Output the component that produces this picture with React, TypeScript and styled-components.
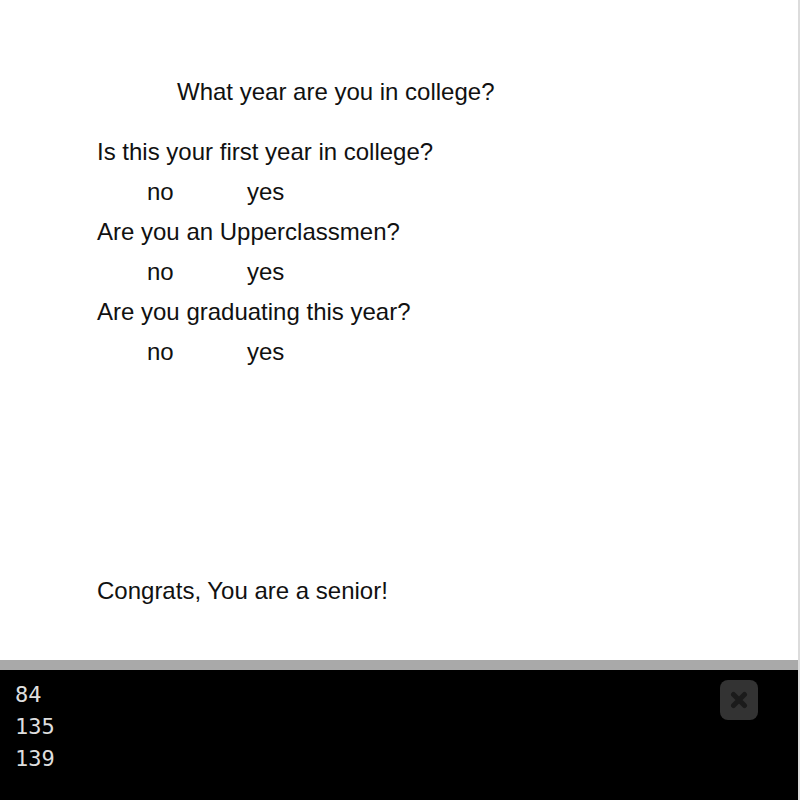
import styled, { createGlobalStyle } from "styled-components";

const questions = [
  "Is this your first year in college?",
  "Are you an Upperclassmen?",
  "Are you graduating this year?",
];

const logs = ["84", "135", "139"];

export default function App() {
  return (
    <>
      <GlobalStyle />
      <Page>
        <Main>
          <Sketch>
            <Title>What year are you in college?</Title>
            <Questions>
              {questions.map((q) => (
                <div key={q}>
                  <Question>{q}</Question>
                  <Answers>
                    <Answer>no</Answer>
                    <Answer>yes</Answer>
                  </Answers>
                </div>
              ))}
            </Questions>
            <Result>Congrats, You are a senior!</Result>
          </Sketch>
          <Divider />
          <Console>
            {logs.map((line, i) => (
              <LogLine key={i}>{line}</LogLine>
            ))}
            <CloseButton aria-label="close console">
              <svg width="18" height="18" viewBox="0 0 18 18">
                <path
                  d="M3.5 3.5 L14.5 14.5 M14.5 3.5 L3.5 14.5"
                  stroke="#1b1b1b"
                  strokeWidth="5"
                  strokeLinecap="round"
                />
              </svg>
            </CloseButton>
          </Console>
        </Main>
        <EdgeStrip />
      </Page>
    </>
  );
}

// STYLED COMPONENTS
const GlobalStyle = createGlobalStyle`
  html, body {
    margin: 0;
    padding: 0;
    background: #fff;
  }
`;

const Page = styled.div`
  display: flex;
  width: 800px;
  height: 800px;
  overflow: hidden;
`;

const Main = styled.div`
  flex: 1;
  display: flex;
  flex-direction: column;
  min-width: 0;
`;

const EdgeStrip = styled.div`
  width: 2px;
  background: #dcdcdc;
`;

const Sketch = styled.div`
  height: 660px;
  box-sizing: border-box;
  padding: 72px 0 0 97px;
  background: #fff;
  font-family: "Liberation Sans", Arial, sans-serif;
  font-size: 24px;
  line-height: 40px;
  color: #111;
`;

const Title = styled.div`
  padding-left: 80px;
`;

const Questions = styled.div`
  margin-top: 20px;
`;

const Question = styled.div``;

const Answers = styled.div`
  display: flex;
  padding-left: 50px;
`;

const Answer = styled.span`
  width: 100px;
`;

const Result = styled.div`
  margin-top: 199px;
`;

const Divider = styled.div`
  height: 10px;
  background: #a9a9a9;
`;

const Console = styled.div`
  position: relative;
  flex: 1;
  background: #000;
  padding: 9px 0 0 15px;
  font-family: "DejaVu Sans Mono", monospace;
  font-size: 22px;
  line-height: 32px;
  color: #dedede;
`;

const LogLine = styled.div``;

const CloseButton = styled.button`
  position: absolute;
  top: 10px;
  right: 40px;
  width: 38px;
  height: 40px;
  border: none;
  border-radius: 8px;
  background: #333;
  padding: 0;
  display: flex;
  align-items: center;
  justify-content: center;
  cursor: pointer;
`;
